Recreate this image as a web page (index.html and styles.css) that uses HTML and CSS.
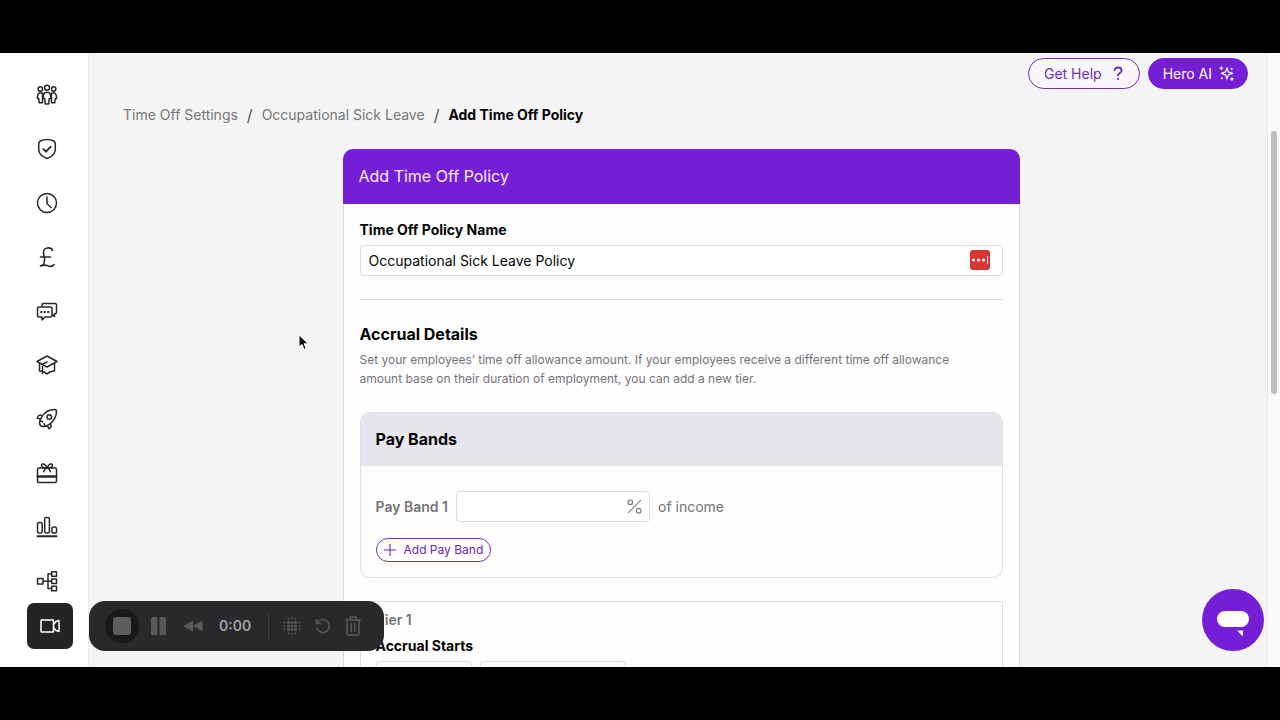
FILE: index.html
```html
<!DOCTYPE html>
<html lang="en">
<head>
<meta charset="utf-8">
<title>Add Time Off Policy</title>
<link rel="stylesheet" href="styles.css">
</head>
<body>
<div class="app">
  <nav class="sidebar" aria-label="Main">
    <a class="nav-link" href="#" aria-label="People"><svg viewBox="0 0 22 22"><circle cx="11" cy="3.8" r="2.5"/><circle cx="4.3" cy="5" r="2.2"/><circle cx="17.7" cy="5" r="2.2"/><path d="M9 8.500h4c1.300 1 1.800 3 1.800 6h-1.600l-.5 5.500H9.300l-.5-5.500H7.200c0-3 .5-5 1.800-6zM6.500 9H3.200C1.800 10 1.400 12 1.400 14.500h1.300l.6 4.300h3.200zM15.500 9h3.300c1.400 1 1.800 3 1.800 5.500h-1.300l-.6 4.300h-3.200z"/></svg></a>
    <a class="nav-link" href="#" aria-label="Compliance"><svg viewBox="0 0 22 22"><path d="M11 1.500c2.500 0 5 .7 6.700 1.500 1.100.6 1.600 1.500 1.600 3v5.500c0 4.500-3.800 7.300-8.300 9-4.500-1.700-8.300-4.500-8.300-9V6c0-1.500.5-2.400 1.600-3C6 2.200 8.500 1.500 11 1.500z"/><path d="M7.300 11.200l2.700 2.500 4.700-5" stroke-width="1.800"/></svg></a>
    <a class="nav-link" href="#" aria-label="Time off"><svg viewBox="0 0 22 22"><circle cx="11" cy="11" r="9.500"/><path d="M11 5v6.500l4 4"/></svg></a>
    <a class="nav-link" href="#" aria-label="Payroll"><svg viewBox="0 0 22 22"><path d="M16.500 4.500C15.500 1 7.500.5 7.500 6.500c0 3 1.500 5.500 1 8.500-.4 2.800-2 4.500-4 5 4-1.800 6-.8 8 0 2.200.8 4 .5 5.500-1.500M4.500 11h10" stroke-width="1.600"/></svg></a>
    <a class="nav-link" href="#" aria-label="Messages"><svg viewBox="0 0 22 22"><path d="M3 7h11.500c1 0 1.500.5 1.500 1.500v7c0 1-.5 1.500-1.500 1.500H9l-3 3v-3H3c-1 0-1.500-.5-1.500-1.500v-7C1.500 7.500 2 7 3 7zM6 6.500V5c0-1 .5-1.500 1.500-1.500H19c1 0 1.500.5 1.500 1.500v7c0 1-.5 1.800-1.500 1.800h-.5v2.700l-2-2"/><path d="M5 12h.5M8.500 12H9M12 12h.5" stroke-width="2"/></svg></a>
    <a class="nav-link" href="#" aria-label="Learning"><svg viewBox="0 0 22 22"><path d="M11 2l10 5.500L11 13 1 7.500zM3.500 9.500V17c2.500 0 5.500 1 7.500 3 2-2 5-3 7.500-3V9.500M11 8L6.500 10.200V19.500"/></svg></a>
    <a class="nav-link" href="#" aria-label="Performance"><svg viewBox="0 0 22 22"><path d="M5.500 9.500C8.500 4 13 1.500 18.500 1.500c1.500 0 2 .5 2 2 0 5.500-3 10-8 13.500-2 1.300-4 1.800-6 1.500C4 18 3.500 17 3.500 15c0-2 .8-3.800 2-5.500zM6.500 8C4 6 1.800 7.500 1.300 10.200l3.500.8M14 15.500c2.200 2 1.200 4.300-1 5.300l-1.800-3.300M4 13l2.500.8M9 18l-1-2.500"/><circle cx="13.300" cy="9" r="2.300"/></svg></a>
    <a class="nav-link" href="#" aria-label="Benefits"><svg viewBox="0 0 22 22"><rect x="1.500" y="6" width="19" height="14.500" rx="1.500"/><path d="M2 14.500h18" stroke-width="2.600"/><path d="M11 6C8 6 5.500 5 5.500 3.200S9 .8 11 6c2-5.200 5.500-4.600 5.500-2.800S14 6 11 6zM11 6c-1 0-2.500 1.500-3.500 3.800M11 6c1 0 2.500 1.500 3.500 3.800"/></svg></a>
    <a class="nav-link" href="#" aria-label="Reports"><svg viewBox="0 0 22 22"><rect x="1.500" y="6.500" width="4.700" height="10.500" rx="1.500"/><rect x="8.700" y="1.500" width="4.700" height="15.500" rx="1.500"/><rect x="15.900" y="11" width="4.700" height="6" rx="1.800"/><path d="M1.500 20.300h19" stroke-width="1.900"/></svg></a>
    <a class="nav-link" href="#" aria-label="Organisation"><svg viewBox="0 0 22 22"><rect x="1.500" y="8.500" width="5.500" height="5.500"/><rect x="15.700" y="1.800" width="4.800" height="4.500"/><rect x="15.700" y="9" width="4.800" height="4.500"/><rect x="15.700" y="16.200" width="4.800" height="4.500"/><path d="M7 11.200h8.500M15.500 4H12v14.500h3.500"/></svg></a>
  </nav>

  <main class="main">
    <div class="topbar">
      <button class="pill outline" type="button">Get Help <svg class="help-icon" viewBox="0 0 12 16"><path d="M2.500 4.200C2.500.8 9.800.6 9.800 4.800c0 3-3.800 2.700-3.800 5.200M6 13.600v.6"/></svg></button>
      <button class="pill solid" type="button">Hero AI <svg class="spark-icon" viewBox="0 0 16 16"><path d="M8.500 2l1.400 4.300 4.600 1.500-4.600 1.600-1.400 4.400-1.500-4.400-4.500-1.600L7 6.300zM2.500.8v3M1 2.300h3"/><circle cx="13.500" cy="3" r=".5"/><circle cx="13.800" cy="13.800" r="1"/><circle cx="3" cy="13" r=".4"/></svg></button>
    </div>
    <nav class="crumbs" aria-label="Breadcrumb">
      <a href="#">Time Off Settings</a><span>/</span><a href="#">Occupational Sick Leave</a><span>/</span><strong>Add Time Off Policy</strong>
    </nav>

    <form class="card">
      <h1 class="card-title">Add Time Off Policy</h1>
      <div class="card-body">
        <label class="label" for="policy">Time Off Policy Name</label>
        <div class="field">
          <input id="policy" type="text" value="Occupational Sick Leave Policy">
          <svg class="manager" viewBox="0 0 20 20" aria-hidden="true"><rect width="20" height="20" rx="3" fill="#d93636"/><circle cx="3.500" cy="10" r="1.500"/><circle cx="8.500" cy="10" r="1.500"/><circle cx="13.500" cy="10" r="1.500"/><rect x="17" y="6" width="1" height="8"/></svg>
        </div>
        <hr class="rule">
        <h2 class="section-title">Accrual Details</h2>
        <p class="help">Set your employees’ time off allowance amount. If your employees receive a different time off allowance amount base on their duration of employment, you can add a new tier.</p>

        <section class="panel">
          <h3 class="panel-title">Pay Bands</h3>
          <div class="panel-body">
            <div class="band">
              <label for="band">Pay Band 1</label>
              <div class="field percent">
                <input id="band" type="text">
                <svg viewBox="0 0 16 16" aria-hidden="true"><circle cx="3.500" cy="3.500" r="2.500"/><circle cx="12.500" cy="12.500" r="2.500"/><path d="M14.500 1.500l-13 13"/></svg>
              </div>
              <span>of income</span>
            </div>
            <button class="add" type="button"><svg viewBox="0 0 12 12"><path d="M6 0v12M0 6h12"/></svg>Add Pay Band</button>
          </div>
        </section>

        <section class="tier">
          <h3 class="tier-title">Tier 1</h3>
          <label class="label" for="starts">Accrual Starts</label>
          <div class="starts">
            <input id="starts" type="text">
            <input type="text" aria-label="Accrual starts unit">
          </div>
        </section>
      </div>
    </form>
  </main>
  <div class="scrollbar"><div class="thumb"></div></div>
</div>

<div class="recorder">
  <button class="camera" type="button" aria-label="Camera"><svg viewBox="0 0 20 14"><rect x="1" y="1" width="12.500" height="12" rx=".5"/><path d="M13.500 5.500l2.500-3 3-1v11l-3-1-2.500-3"/></svg></button>
  <div class="controls">
    <button class="stop" type="button" aria-label="Stop"><span></span></button>
    <button class="pause" type="button" aria-label="Pause"><svg viewBox="0 0 16 18"><rect width="6.500" height="18" rx="1.500"/><rect x="8.500" width="6.500" height="18" rx="1.500"/></svg></button>
    <button class="rewind" type="button" aria-label="Rewind"><svg viewBox="0 0 20 12"><path d="M10 .5v11L0 6zM19.500 .5v11L9.500 6z"/></svg></button>
    <time class="clock">0:00</time>
    <span class="divider"></span>
    <button class="tool" type="button" aria-label="Blur"><svg class="dots" viewBox="0 0 18 18"><path d="M5.500 5.500h.01M9 5.500h.01M12.500 5.500h.01M5.500 9h.01M9 9h.01M12.500 9h.01M5.500 12.500h.01M9 12.500h.01M12.500 12.500h.01" stroke-width="3"/><path d="M5.500 1.500h.01M9 1h.01M12.500 1.500h.01M1.500 5.500h.01M1 9h.01M1.500 12.500h.01M16.500 5.500h.01M17 9h.01M16.500 12.500h.01M5.500 16.500h.01M9 17h.01M12.500 16.500h.01" stroke-width="1.800"/></svg></button>
    <button class="tool" type="button" aria-label="Restart"><svg class="restart" viewBox="0 0 16 16"><path d="M2.200 4.800A6.500 6.500 0 1 1 1.800 10.500M1.500 1.500v4h4"/></svg></button>
    <button class="tool" type="button" aria-label="Delete"><svg class="trash" viewBox="0 0 16 20"><path d="M.8 4h14.400M5 4V1h6v3M2 4v13.500c0 1 .5 1.500 1.500 1.500h9c1 0 1.500-.5 1.500-1.500V4M6.200 7.500v8M9.800 7.500v8"/></svg></button>
  </div>
</div>
<button class="chat" type="button" aria-label="Open chat"><svg viewBox="0 0 34 28"><rect x="1" y="1" width="32" height="16" rx="8"/><path d="M21 20.500h6v6z"/></svg></button>
<svg class="cursor" viewBox="0 0 11 17" aria-hidden="true"><path d="M1 1v12l3-2.500 2 5 2.200-1-2-4.700H10z"/></svg>
</body>
</html>
```

FILE: styles.css
```css
* { box-sizing: border-box; }

body {
  margin: 0;
  height: 100vh;
  padding: 53px 0;
  background: #000;
  color: #050505;
  font: 14px/20px Inter, "Noto Sans", sans-serif;
  overflow: hidden;
}

button, input { font: inherit; color: inherit; }
button { padding: 0; border: 0; background: none; }
h1, h2, h3, p { margin: 0; }
a { color: inherit; text-decoration: none; }
svg { display: block; fill: none; stroke: currentColor; stroke-width: 1.5; stroke-linecap: round; stroke-linejoin: round; }

.app { display: flex; height: 100%; background: #f4f4f5; overflow: hidden; }

.sidebar {
  flex: 0 0 89px;
  display: flex;
  flex-direction: column;
  align-items: center;
  gap: 32px;
  padding: 31px 0 0 6px;
  background: #fff;
  border-right: 1px solid #ebebed;
  color: #28282b;
}
.nav-link svg { width: 22px; height: 22px; }

.main { flex: 1; min-width: 0; padding: 5px 28px 0 34px; }

.topbar { display: flex; justify-content: flex-end; gap: 8px; margin-right: -9px; }
.pill {
  display: flex;
  align-items: center;
  gap: 8px;
  height: 31px;
  padding: 0 15px;
  border: 1px solid #6f35b5;
  border-radius: 16px;
}
.outline { color: #6a31ae; gap: 10px; background: #f8f6fb; }
.solid { gap: 7px; padding: 0 13px 0 14px; color: #fff; background: #741fd5; border-color: #741fd5; }
.help-icon { width: 12px; height: 15px; stroke-width: 2; }
.spark-icon { width: 15px; height: 15px; stroke-width: 1.3; }

.crumbs { display: flex; gap: 9px; margin: 16px 0 24px; color: #777; }
.crumbs span { color: #555; font-size: 16px; }
.crumbs strong { color: #050505; font-weight: 700; }

.card {
  max-width: 677px;
  margin: 0 auto;
  background: #fefdfe;
  border: 1px solid #dcdbe0;
  border-top: 0;
  border-radius: 10px 10px 0 0;
}
.card-title {
  margin: 0 -1px;
  padding: 15px 16px 16px;
  border-radius: 10px 10px 0 0;
  background: #741fd5;
  color: #fbeaff;
  font-size: 16px;
  line-height: 24px;
  font-weight: 400;
}
.card-body { padding: 16px; }
.label { display: block; margin-bottom: 5px; font-weight: 700; }
.field { position: relative; }
input { height: 31px; padding: 0 8px; border: 1px solid #dddce1; border-radius: 4px; background: #fff; }
.field input { display: block; width: 100%; }
.manager { position: absolute; top: 5px; right: 13px; width: 20px; height: 20px; fill: #fff; stroke: none; }
.rule { height: 1px; margin: 23px 0 22px; border: 0; background: #dcdbdf; }
.section-title { font-size: 16px; line-height: 24px; font-weight: 700; }
.help { max-width: 620px; margin: 4px 0 24px; color: #757478; font-size: 12px; line-height: 19px; }

.panel { margin-bottom: 23px; border: 1px solid #dfdfe4; border-radius: 10px; overflow: hidden; }
.panel-title { padding: 14px 15px 15px; background: #e5e7ed; font-size: 16px; line-height: 24px; font-weight: 700; }
.panel-body { padding: 25px 15px 15px; }
.band { display: flex; align-items: center; gap: 8px; margin-bottom: 16px; color: #757478; }
.band label { font-weight: 600; }
.percent { width: 194px; }
.percent svg { position: absolute; top: 8px; right: 8px; width: 15px; height: 15px; stroke-width: 1.1; }
.add {
  display: flex;
  align-items: center;
  gap: 8px;
  height: 24px;
  padding: 0 7px;
  border: 1px solid #6f35b5;
  border-radius: 12px;
  color: #6528b3;
  font-size: 12px;
}
.add svg { width: 12px; height: 12px; stroke-width: 1.1; }

.tier { padding: 8px 15px 16px; border: 1px solid #dddce1; }
.tier-title { margin-bottom: 6px; color: #757478; font-size: 14px; line-height: 20px; font-weight: 600; }
.starts { display: flex; gap: 8px; }
.starts input { width: 96px; }
.starts input + input { width: 146px; }

.scrollbar { flex: 0 0 13px; padding: 78px 3px 0; background: #fafafa; border-left: 1px solid #e8e8ea; }
.thumb { height: 263px; border-radius: 4px; background: #bebec0; }

.recorder { position: absolute; left: 27px; bottom: 69px; display: flex; align-items: center; gap: 16px; }
.camera { display: grid; place-items: center; width: 46px; height: 46px; border-radius: 7px; background: #242427; color: #fff; }
.camera svg { width: 20px; height: 14px; }
.controls {
  display: flex;
  align-items: center;
  height: 50px;
  width: 295px;
  padding: 0 23px 0 16px;
  border-radius: 16px;
  background: #29282b;
  color: #59595c;
}
.stop { display: grid; place-items: center; width: 34px; height: 34px; margin-right: 12px; border-radius: 50%; background: #19191b; }
.stop span { width: 18px; height: 18px; border-radius: 3px; background: #5b5d5e; }
.pause svg { width: 16px; height: 18px; }
.rewind { margin: 0 16px; }
.rewind svg { width: 20px; height: 12px; }
.pause svg, .rewind svg { fill: currentColor; stroke: none; }
.clock { color: #a2a2a5; font-weight: 600; flex: 1; }
.divider { width: 1px; height: 28px; margin-right: 14px; background: #3e3d41; }
.tool { margin-left: 14px; }
.divider + .tool { margin-left: 0; }
.dots { width: 18px; height: 18px; }
.restart { width: 16px; height: 16px; }
.trash { width: 16px; height: 20px; }

.chat { position: absolute; right: 16px; bottom: 69px; display: grid; place-items: center; width: 62px; height: 62px; border-radius: 50%; background: #741fd5; color: #fff; }
.chat svg { width: 34px; height: 28px; margin-top: 8px; fill: currentColor; stroke: none; }
.cursor { position: absolute; left: 298px; top: 334px; width: 11px; height: 17px; fill: #111; stroke: #fff; stroke-width: 1; }
```
